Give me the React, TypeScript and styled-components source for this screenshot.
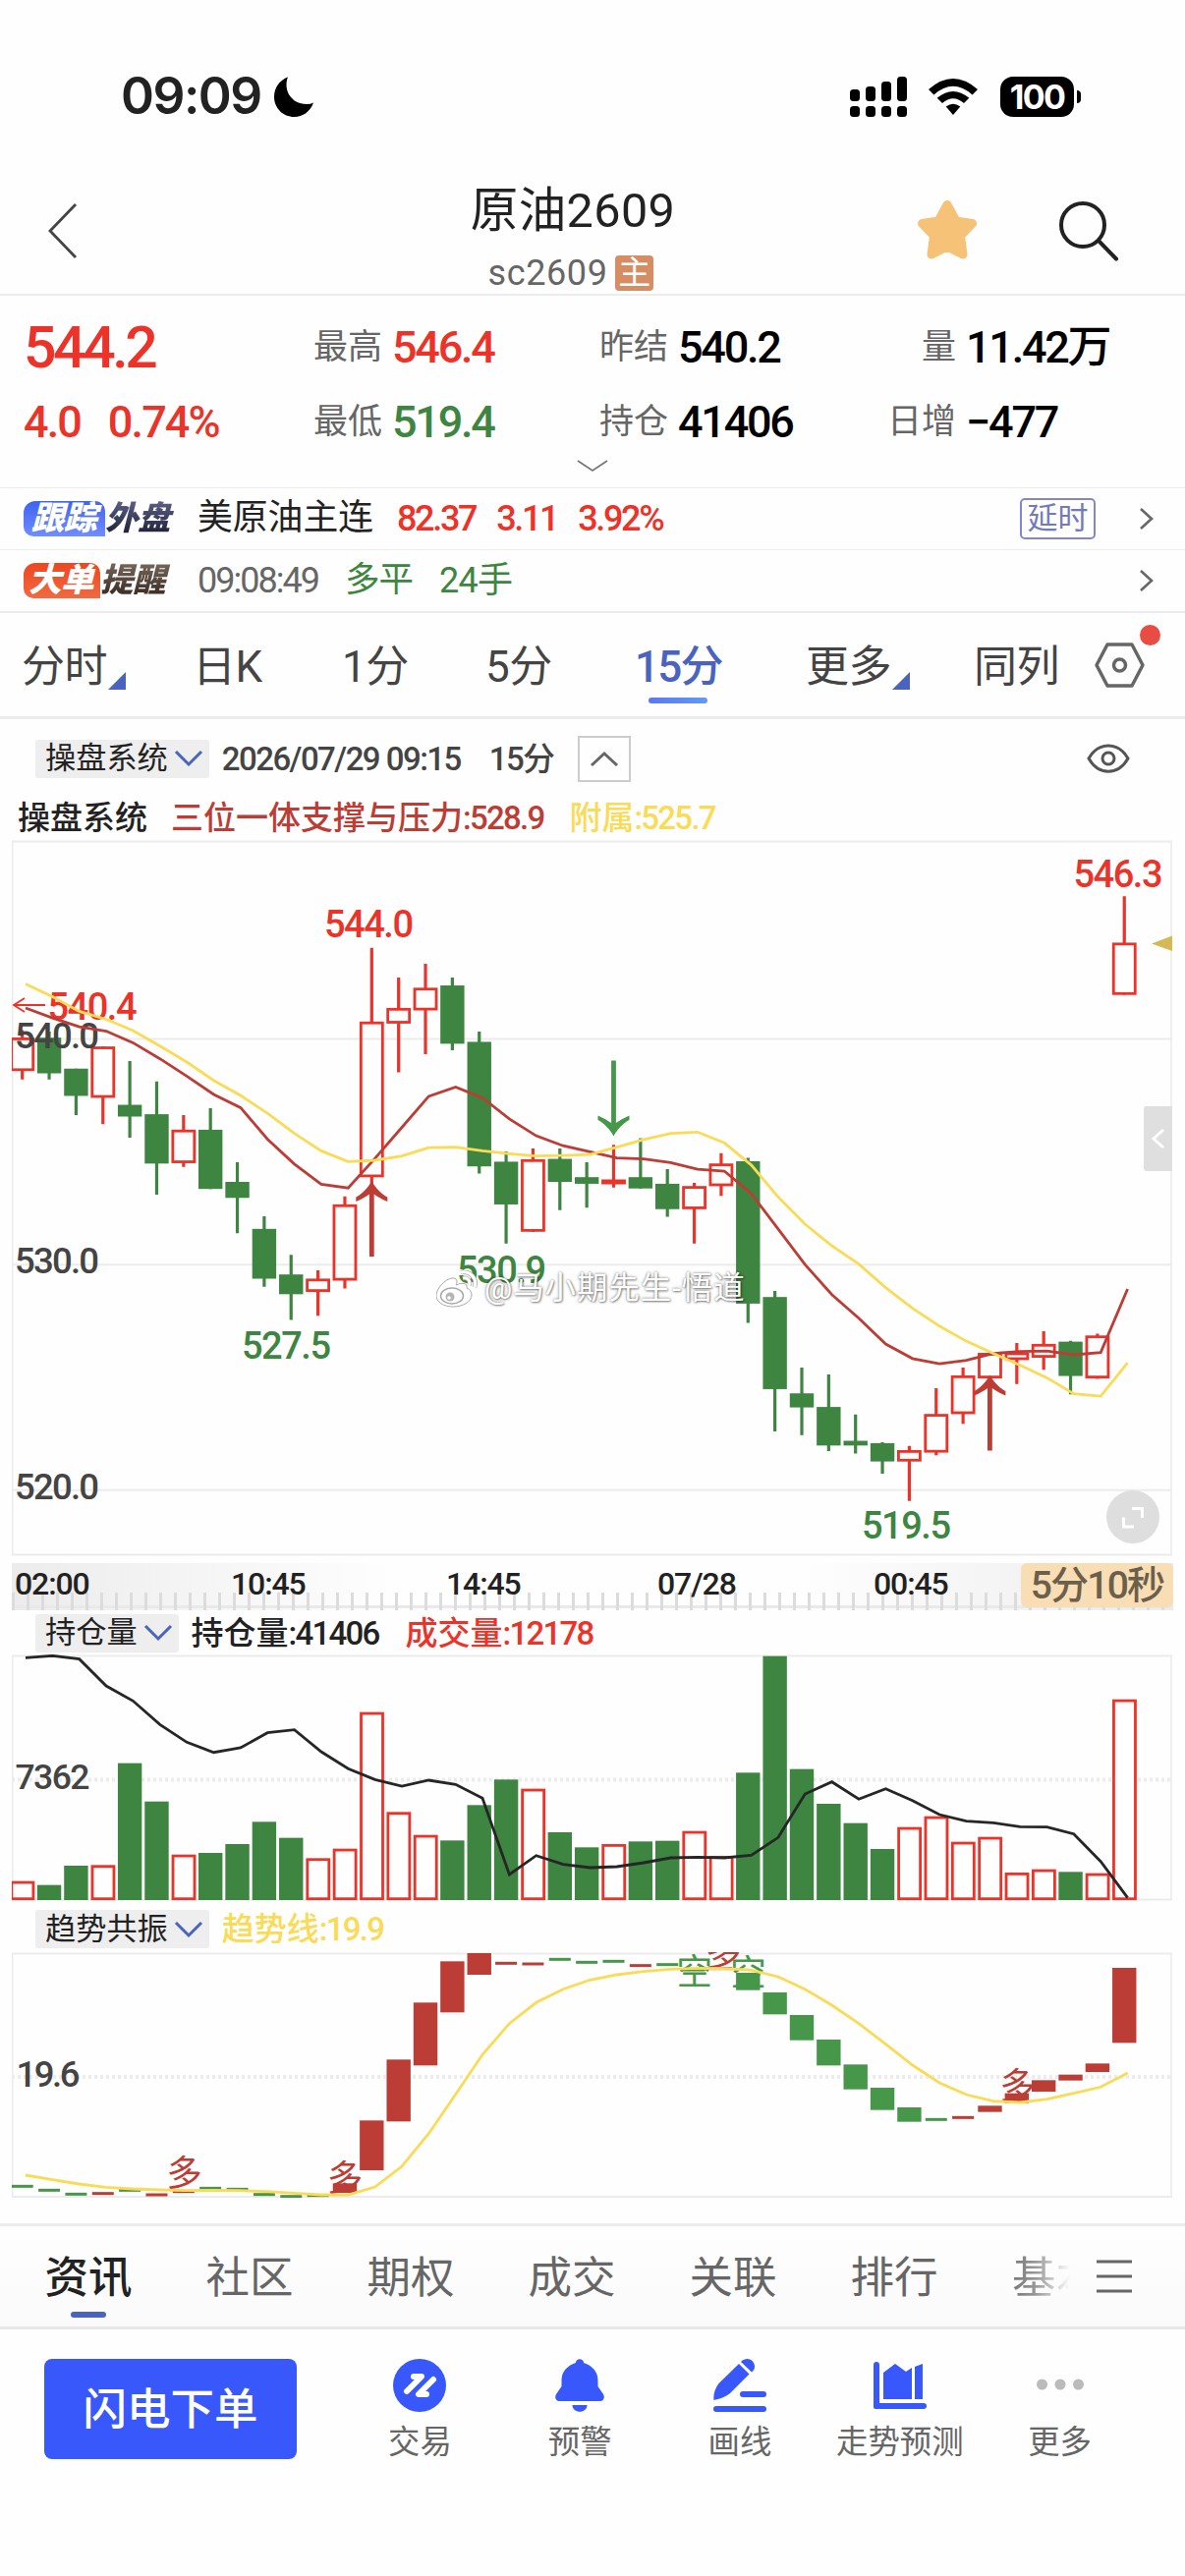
import React from 'react';
import styled, { createGlobalStyle, css } from 'styled-components';

const colors = {
  red: '#eb3329',
  green: '#3d8540',
  deepRed: '#bb3d35',
  trendGreen: '#469749',
  yellow: '#fadb58',
  blue: '#4a63be',
  action: '#3858fb',
  text: '#222222',
  axis: '#444444',
  muted: '#666666',
  line: '#ececec',
  badge: '#eeeeee',
};

const GlobalStyle = createGlobalStyle`
  * {
    box-sizing: border-box;
  }
  body {
    margin: 0;
    background: #fefefe;
    color: ${colors.text};
    font-family: Roboto, 'Noto Sans CJK SC', sans-serif;
    line-height: 1;
  }
  svg {
    display: block;
    flex-shrink: 0;
  }
`;

/***************************************************************
  Chart data. One entry per 15 minute bar.
  Candles: [direction, high, body top, body bottom, low]
***************************************************************/

type Candle = ['r' | 'g', number, number, number, number];

const candles: Candle[] = [
  ['r', 415, 431, 502, 520], ['g', 418, 431, 507, 520], ['g', 497, 497, 555, 596],
  ['r', 450, 450, 559, 615], ['g', 481, 574, 599, 644], ['g', 524, 594, 699, 765],
  ['r', 596, 627, 698, 706], ['g', 581, 627, 753, 753], ['g', 696, 738, 772, 847],
  ['g', 811, 838, 944, 961], ['g', 893, 935, 977, 1032], ['r', 926, 944, 972, 1023],
  ['r', 769, 786, 948, 965], ['r', 240, 397, 728, 745], ['r', 303, 368, 401, 505],
  ['r', 274, 325, 373, 466], ['g', 303, 320, 444, 458], ['g', 418, 440, 705, 720],
  ['g', 673, 695, 786, 869], ['r', 667, 690, 844, 844], ['g', 667, 689, 738, 798],
  ['g', 696, 728, 742, 793], ['r', 659, 733, 743, 750], ['g', 645, 728, 752, 752],
  ['g', 711, 742, 796, 812], ['r', 740, 747, 796, 869], ['r', 677, 699, 747, 768],
  ['g', 687, 694, 997, 1038], ['g', 970, 983, 1179, 1269], ['g', 1133, 1188, 1218, 1277],
  ['g', 1148, 1217, 1299, 1311], ['g', 1233, 1289, 1299, 1316], ['g', 1292, 1294, 1333, 1359],
  ['r', 1300, 1309, 1333, 1417], ['r', 1177, 1232, 1314, 1320], ['r', 1133, 1150, 1232, 1253],
  ['r', 1101, 1102, 1156, 1156], ['r', 1081, 1101, 1117, 1168], ['r', 1056, 1083, 1112, 1138],
  ['g', 1076, 1078, 1151, 1190], ['r', 1061, 1065, 1156, 1157], ['r', 130, 229, 340, 340],
];

const supportLine = [
  368, 389, 408, 417, 442, 476, 513, 552, 580, 647, 700, 743, 751, 688, 622, 556, 536, 559,
  604, 640, 661, 674, 687, 689, 697, 711, 715, 763, 838, 914, 978, 1028, 1083, 1114, 1125,
  1118, 1103, 1099, 1098, 1106, 1101, 966,
];

const auxLine = [
  317, 344, 375, 392, 416, 449, 483, 522, 554, 592, 635, 672, 695, 692, 683, 665, 664, 672,
  678, 683, 682, 680, 664, 648, 635, 632, 655, 702, 770, 828, 874, 913, 963, 1007, 1045,
  1077, 1103, 1128, 1155, 1189, 1194, 1123,
];

const volumes = [
  1034, 1046, 987, 985, 674, 791, 953, 948, 921, 853, 902, 964, 935, 518, 823, 893, 910, 802,
  724, 752, 885, 931, 921, 913, 911, 881, 957, 703, 347, 692, 798, 857, 936, 869, 836, 914,
  899, 1008, 998, 1006, 1010, 479,
];

const openInterest = [
  352, 346, 356, 438, 484, 556, 610, 641, 627, 581, 572, 639, 691, 724, 744, 726, 739, 781,
  1014, 956, 983, 993, 990, 978, 963, 961, 963, 955, 901, 768, 731, 784, 752, 788, 831, 851,
  856, 868, 869, 890, 974, 1085,
];

// A bar with one value is drawn as a dash.
const trendBars: [('r' | 'g'), number, number?][] = [
  ['g', 886], ['g', 898], ['g', 910], ['r', 908], ['g', 898], ['r', 912], ['r', 902],
  ['g', 892], ['g', 895], ['g', 911], ['g', 917], ['g', 914], ['r', 877, 906],
  ['r', 685, 837], ['r', 499, 688], ['r', 325, 517], ['r', 199, 355], ['r', 174, 240],
  ['r', 205], ['r', 207], ['g', 193], ['g', 202], ['g', 199], ['r', 212], ['g', 209],
  ['g', 225], ['r', 221], ['g', 234, 287], ['g', 294, 361], ['g', 363, 440],
  ['g', 438, 517], ['g', 514, 590], ['g', 585, 653], ['g', 645, 689], ['g', 682],
  ['r', 676], ['r', 640, 659], ['r', 602, 632], ['r', 562, 597], ['r', 545, 563],
  ['r', 511, 537], ['r', 219, 448],
];

const trendLine = [
  852, 866, 879, 889, 894, 897, 899, 898, 899, 902, 907, 912, 912, 888, 825, 725, 605, 484,
  389, 325, 284, 256, 240, 230, 223, 220, 221, 226, 246, 284, 333, 389, 452, 516, 570, 606,
  626, 630, 620, 602, 583, 540,
];

const barX = (i: number) => 22.7 + i * 27.355;
const priceY = (v: number) => v / 2.0907 - 5;
const volumeY = (v: number) => v / 3 - 114;
const trendY = (v: number) => v / 3 - 57;

const toPoints = (values: number[], y: (v: number) => number) =>
  values.map((v, i) => `${(barX(i) + 3.3).toFixed(1)},${y(v).toFixed(1)}`).join(' ');

/***************************************************************
  Status bar and header
***************************************************************/

const Screen = styled.main`
  width: 1206px;
  height: 2622px;
  overflow: hidden;
  background: #fefefe;
`;

const StatusBar = styled.div`
  display: flex;
  align-items: center;
  height: 176px;
  padding: 20px 106px 0 123px;
`;

const Clock = styled.span`
  width: 156px;
  font: 600 51.5px/1 Inter, sans-serif;
  letter-spacing: -1.5px;
  white-space: nowrap;
`;

const StatusIcons = styled.div`
  display: flex;
  align-items: center;
  margin-left: auto;
`;

const Battery = styled.div`
  position: relative;
  width: 75px;
  height: 41px;
  margin: 0 7px 0 23px;
  border-radius: 13px;
  background: #000;
  color: #fff;
  font: 700 34px/41px Inter, sans-serif;
  letter-spacing: -1.6px;
  text-align: center;

  &::after {
    content: '';
    position: absolute;
    left: 78px;
    top: 14px;
    width: 4px;
    height: 13px;
    border-radius: 0 4px 4px 0;
    background: #000;
  }
`;

const Header = styled.header`
  display: grid;
  grid-template-columns: 430px 306px 1fr;
  height: 125px;
  border-bottom: 2px solid ${colors.line};
`;

const HeaderLeft = styled.div`
  padding: 30px 0 0 48px;
`;

const HeaderTitle = styled.div`
  display: flex;
  flex-direction: column;
  align-items: center;
  font-size: 48px;
`;

const Title = styled.h1`
  margin: 12px 0 0;
  font-size: 48.5px;
  line-height: 54px;
  font-weight: 400;
  letter-spacing: 0.4px;
`;

const Subtitle = styled.div`
  display: flex;
  align-items: center;
  gap: 8px;
  margin: 18px 0 0 -4px;
  color: ${colors.muted};
  font-size: 36px;
  letter-spacing: 0.6px;
`;

const MainTag = styled.span`
  width: 39px;
  height: 36px;
  border-radius: 4px;
  background: #d68d63;
  color: #fff;
  font-size: 33px;
  line-height: 35px;
  text-align: center;
`;

const HeaderRight = styled.div`
  display: flex;
  gap: 82px;
  padding: 27px 0 0 197px;
`;

/***************************************************************
  Quote summary
***************************************************************/

const Quotes = styled.section`
  display: flex;
  flex-direction: column;
  height: 196px;
  border-bottom: 1px solid ${colors.line};
`;

const QuoteRow = styled.div`
  display: grid;
  grid-template-columns: 295px 291px 290px 1fr;
  align-items: center;
  height: 76px;
  padding-left: 24px;

  &:first-child {
    margin-top: 14px;
  }
`;

const Quote = styled.div`
  display: flex;
  align-items: center;
  gap: 10px;
`;

const QuoteLabel = styled.span<{ $end?: boolean }>`
  color: ${colors.muted};
  font-size: 35px;
  ${({ $end }) =>
    $end &&
    css`
      width: 73px;
      text-align: right;
    `}
`;

const Num = styled.span<{ $size: number; $color?: string; $weight?: number; $track?: number }>`
  color: ${({ $color }) => $color ?? '#000'};
  font-size: ${({ $size }) => $size}px;
  font-weight: ${({ $weight }) => $weight ?? 500};
  letter-spacing: ${({ $track }) => $track ?? -0.05}em;
  white-space: pre;
`;

const ExpandQuotes = styled.div`
  display: flex;
  justify-content: center;
  margin-top: 1px;
`;

/***************************************************************
  Notices
***************************************************************/

const Notice = styled.div<{ $last?: boolean }>`
  display: flex;
  align-items: center;
  height: ${({ $last }) => ($last ? 64 : 63)}px;
  padding: 0 32px 0 24px;
  border-bottom: ${({ $last }) => ($last ? 2 : 1)}px solid ${colors.line};
  font-size: 36px;
`;

const Brand = styled.div`
  display: flex;
  width: 177px;
  font-size: 33.5px;
  font-weight: 800;
  font-style: italic;
  line-height: 36px;
  letter-spacing: -0.6px;
`;

const BrandTag = styled.span<{ $warm?: boolean }>`
  width: ${({ $warm }) => ($warm ? 78 : 83)}px;
  height: 36px;
  padding-left: ${({ $warm }) => ($warm ? 5 : 8)}px;
  border-radius: 12px 10px 0 10px;
  background: ${({ $warm }) =>
    $warm
      ? 'linear-gradient(#ee4620, #f06a41)'
      : 'linear-gradient(#3f63f2, #6f8dff)'};
  color: #fff;
`;

const BrandName = styled.span<{ $warm?: boolean }>`
  padding-right: 6px;
  background: ${({ $warm }) =>
    $warm ? 'linear-gradient(#77675a, #35271f)' : 'linear-gradient(#5c6088, #1a1c30)'};
  background-clip: text;
  color: transparent;
`;

const NoticeName = styled.span`
  width: 203px;
  font-size: 35.8px;
`;

const NoticeValues = styled.div<{ $gap: number }>`
  display: flex;
  align-items: center;
  gap: ${({ $gap }) => $gap}px;
`;

const NoticeEnd = styled.div`
  display: flex;
  align-items: center;
  gap: 45px;
  margin-left: auto;
`;

const DelayTag = styled.span`
  width: 77px;
  height: 42px;
  border: 2px solid #8086cf;
  border-radius: 5px;
  color: #7379bd;
  font-size: 31px;
  line-height: 38px;
  text-align: center;
`;

/***************************************************************
  Period tabs
***************************************************************/

const Periods = styled.nav`
  display: flex;
  align-items: center;
  height: 108px;
  padding-left: 22px;
  border-bottom: 3px solid ${colors.line};
`;

const Period = styled.div<{ $width: number; $active?: boolean }>`
  position: relative;
  top: 2px;
  width: ${({ $width }) => $width}px;
  color: ${({ $active }) => ($active ? colors.blue : '#444')};
  font-size: 44px;
  font-weight: ${({ $active }) => ($active ? 500 : 400)};
  letter-spacing: ${({ $active }) => ($active ? -1.8 : -0.6)}px;
  line-height: 60px;
  white-space: nowrap;
`;

const ActiveLine = styled.i`
  position: absolute;
  left: 14px;
  top: 61px;
  width: 60px;
  height: 6px;
  border-radius: 3px;
  background: linear-gradient(90deg, #5a78ee, #629af8);
`;

const Corner = styled.i`
  position: absolute;
  left: 88px;
  top: 35px;
  border-left: 18px solid transparent;
  border-bottom: 18px solid ${colors.blue};
`;

const Settings = styled.div`
  position: relative;
`;

const RedDot = styled.i`
  position: absolute;
  left: 46px;
  top: -18px;
  width: 21px;
  height: 21px;
  border-radius: 50%;
  background: #e74c45;
`;

/***************************************************************
  Chart panels
***************************************************************/

const Toolbar = styled.div`
  display: flex;
  align-items: center;
  height: 78px;
  padding: 2px 56px 0 36px;
`;

const Picker = styled.div`
  display: flex;
  align-items: center;
  gap: 8px;
  height: 39px;
  padding: 0 8px 0 10px;
  border-radius: 3px;
  background: ${colors.badge};
  font-size: 31.2px;
`;

const CollapseButton = styled.div`
  display: flex;
  align-items: center;
  justify-content: center;
  width: 54px;
  height: 47px;
  margin-left: 24px;
  border: 2px solid #ccc;
`;

const EyeSlot = styled.div`
  margin-left: auto;
`;

const Legend = styled.div<{ $height: number; $left: number; $top?: number }>`
  display: flex;
  align-items: center;
  height: ${({ $height }) => $height}px;
  padding: ${({ $top }) => $top ?? 0}px 0 0 ${({ $left }) => $left}px;
`;

const LegendItem = styled.span<{ $color: string; $gap: number }>`
  margin-left: ${({ $gap }) => $gap}px;
  color: ${({ $color }) => $color};
  font-size: 33px;
  font-weight: 500;
  white-space: nowrap;

  b {
    font-weight: 500;
    letter-spacing: -1.75px;
  }
`;

const DateItem = styled(LegendItem)`
  color: ${colors.axis};
  letter-spacing: -1.55px;
`;

const PricePanel = styled.div`
  position: relative;
  height: 729px;
`;

const SideTab = styled.div`
  position: absolute;
  left: 1164px;
  top: 271px;
  display: flex;
  align-items: center;
  justify-content: center;
  width: 29px;
  height: 66px;
  border-radius: 3px 0 0 3px;
  background: #dfdfdf;
`;

const FullScreen = styled.div`
  position: absolute;
  left: 1126px;
  top: 662px;
  width: 54px;
  height: 54px;
  border-radius: 50%;
  background: rgba(218, 218, 218, 0.88);
`;

const Watermark = styled.div`
  position: absolute;
  left: 444px;
  top: 436px;
  display: flex;
  align-items: center;
  gap: 7px;
  color: #fff;
  font-size: 31.5px;
  line-height: 42px;
  letter-spacing: 0.9px;
  white-space: nowrap;
  text-shadow: 0 0 3px rgba(0, 0, 0, 0.55), 1px 1px 2px rgba(0, 0, 0, 0.35);
`;

const TimeAxis = styled.div`
  display: grid;
  grid-template-columns: 220px 219px 215px 220px 1fr auto;
  width: 1182px;
  height: 48px;
  margin: 7px 0 0 12px;
  padding-left: 3px;
  background:
    repeating-linear-gradient(90deg, #dcdcdc 0 3px, transparent 3px 15px) 0 30px / 100% 18px
      no-repeat,
    linear-gradient(#e9e9e9, #e9e9e9) 0 43px / 100% 3px no-repeat,
    linear-gradient(90deg, #ececec, #fefefe 33%, #fefefe 68%, #ececec);
`;

const TimeLabel = styled.span`
  padding-top: 5px;
  font-size: 32px;
  font-weight: 500;
  letter-spacing: -1.1px;
`;

const Countdown = styled.span`
  width: 155px;
  height: 45px;
  border-radius: 6px;
  background: #f9deb5;
  color: #6b604c;
  font-size: 39px;
  font-weight: 500;
  letter-spacing: -1.8px;
  line-height: 46px;
  text-align: center;
  white-space: nowrap;
`;

const ChartText = styled.text`
  font-family: Roboto, 'Noto Sans CJK SC', sans-serif;
  font-weight: 500;
`;

const MarkText = styled(ChartText)`
  font-size: 36.5px;
  font-weight: 400;
  text-anchor: middle;
`;

/***************************************************************
  Bottom navigation
***************************************************************/

const InfoTabs = styled.nav`
  display: flex;
  align-items: center;
  height: 108px;
  margin-top: 26px;
  padding-left: 8px;
  border-top: 3px solid ${colors.line};
  border-bottom: 3px solid #e7e7e7;
  background: linear-gradient(#fefefe, #fafafa);
`;

const InfoTab = styled.div<{ $active?: boolean }>`
  position: relative;
  width: 164px;
  color: ${({ $active }) => ($active ? '#222' : colors.muted)};
  font-size: 44.5px;
  font-weight: ${({ $active }) => ($active ? 500 : 400)};
  line-height: 60px;
  padding-top: 4px;
  text-align: center;

  &::after {
    content: '';
    display: ${({ $active }) => ($active ? 'block' : 'none')};
    position: absolute;
    left: 64px;
    top: 68px;
    width: 36px;
    height: 6px;
    border-radius: 3px;
    background: ${colors.blue};
  }
`;

const FadedTab = styled.div`
  width: 62px;
  margin: 0 24px 0 38px;
  padding-top: 4px;
  overflow: hidden;
  background: linear-gradient(90deg, #777 0, #999 40%, transparent 95%);
  background-clip: text;
  color: transparent;
  font-size: 44.5px;
  line-height: 60px;
  white-space: nowrap;
`;

const BottomBar = styled.footer`
  display: flex;
  padding: 30px 0 0 45px;
`;

const OrderButton = styled.button`
  width: 257px;
  height: 102px;
  margin-right: 44px;
  padding: 2px 0 0;
  border: 0;
  border-radius: 8px;
  background: ${colors.action};
  color: #fff;
  font: 500 44.5px/100px Roboto, 'Noto Sans CJK SC', sans-serif;
`;

const Action = styled.div`
  display: flex;
  flex-direction: column;
  align-items: center;
  gap: 15px;
  width: 162.8px;
  color: ${colors.muted};
  font-size: 32.4px;
  white-space: nowrap;
`;

/***************************************************************
  Small drawings
***************************************************************/

const Chevron: React.FC<{
  width: number;
  height: number;
  points: string;
  color: string;
  stroke?: number;
}> = ({ width, height, points, color, stroke = 3 }) => (
  <svg width={width} height={height} overflow="visible">
    <polyline points={points} fill="none" stroke={color} strokeWidth={stroke} />
  </svg>
);

const PickerArrow = () => (
  <Chevron width={26} height={14} points="0,0 13,13 26,0" color={colors.blue} />
);

const NextArrow = () => (
  <Chevron width={14} height={20} points="1,0 12,10 1,20" color="#666" stroke={2.6} />
);

const SignalIcon = () => (
  <svg width="58" height="41">
    {[13, 10, 5, 0].map((top, i) => (
      <g key={top}>
        <rect x={i * 16} y={top} width="10" height={25 - top} rx="3.5" />
        <rect x={i * 16} y="30" width="10" height="11" rx="3.5" />
      </g>
    ))}
  </svg>
);

const WifiIcon = () => (
  <svg width="50" height="37" viewBox="0 0 50 37">
    <path d="M0 11Q25-11 50 11L44.6 16.6Q25-1 5.4 16.6Z" />
    <path d="M8.7 19.8Q25 6 41.3 19.8L36 25Q25 15.5 14 25Z" />
    <path d="M17.7 28.5Q25 23 32.3 28.5L25 37Z" />
  </svg>
);

const SignalArrow: React.FC<{ x: number; y: number; color: string; down?: boolean }> = ({
  x,
  y,
  color,
  down,
}) => (
  <path
    transform={`translate(${x} ${y}) scale(1 ${down ? -1 : 1})`}
    d="M0 0C4 8 11 14 16 16.5V21C10 18.5 6 16 2.4 13.5V77H-2.4V13.5C-6 16-10 18.5-16 21V16.5C-11 14-4 8 0 0Z"
    fill={color}
  />
);

const WeiboIcon = () => (
  <svg width="42" height="38" viewBox="0 0 42 38" fill="none">
    <path
      d="M36 25C36 32 27 37 17 37S0 32 0 26C0 18 9 9 16 8C21 7.5 22 11 20 15C27 12 32 13 31 18C34 19 36 22 36 25Z"
      fill="#fff"
      stroke="#aaa"
    />
    <ellipse cx="16" cy="26" rx="11.5" ry="8" stroke="#aaa" strokeWidth="1.5" />
    <circle cx="14" cy="27" r="4.5" fill="#b5b5b5" />
    <circle cx="13" cy="28" r="1.8" fill="#fff" />
    <path d="M25 2C34 0 42 8 39 17M27 8C32 7 35 11 33.5 15" stroke="#aaa" strokeWidth="4.5" />
    <path d="M25 2C34 0 42 8 39 17M27 8C32 7 35 11 33.5 15" stroke="#fff" strokeWidth="3" />
  </svg>
);

const Frame: React.FC<{ bottom: number }> = ({ bottom }) => (
  <>
    <path d={`M12 1.5H1193M12 ${bottom}H1193`} stroke={colors.line} strokeWidth="2" />
    <path d={`M12.7 1V${bottom}M1192 1V${bottom}`} stroke={colors.line} strokeWidth="1.5" />
  </>
);

/***************************************************************
  Charts
***************************************************************/

const priceTags = [
  { text: '544.0', x: 330, y: 99, color: colors.red },
  { text: '540.4', x: 48.5, y: 183, color: colors.red },
  { text: '546.3', x: 1092.5, y: 48, color: colors.red },
  { text: '527.5', x: 246, y: 528, color: colors.green },
  { text: '530.9', x: 465, y: 450.5, color: colors.green },
  { text: '519.5', x: 877, y: 711, color: colors.green },
];

const axisTags = [
  { text: '540.0', y: 211.5 },
  { text: '530.0', y: 440.8 },
  { text: '520.0', y: 670.5 },
];

const PriceChart = () => (
  <svg width="1206" height="729">
    <defs>
      <clipPath id="plot">
        <rect x="12" y="0" width="1182" height="729" />
      </clipPath>
    </defs>
    <Frame bottom={727.5} />
    {[434, 914, 1394].map((v) => (
      <path key={v} d={`M12 ${priceY(v)}H1193`} stroke={colors.line} strokeWidth="2" />
    ))}
    <g clipPath="url(#plot)">
      {candles.map(([side, high, top, bottom, low], i) => {
        const x = barX(i);
        const color = side === 'r' ? colors.red : colors.green;
        return (
          <g key={i}>
            <path
              d={`M${x} ${priceY(high)}V${priceY(top) + 1}M${x} ${priceY(bottom) - 1}V${priceY(low)}`}
              stroke={color}
              strokeWidth="3.2"
            />
            {side === 'g' ? (
              <rect
                x={x - 12.2}
                y={priceY(top)}
                width="24.4"
                height={priceY(bottom) - priceY(top)}
                fill={color}
              />
            ) : (
              <rect
                x={x - 11}
                y={priceY(top) + 1.3}
                width="22"
                height={Math.max(priceY(bottom) - priceY(top) - 2.6, 1.5)}
                fill="none"
                stroke={color}
                strokeWidth="2.8"
              />
            )}
          </g>
        );
      })}
    </g>
    {axisTags.map(({ text, y }) => (
      <ChartText key={text} x="15" y={y} fontSize="36.5" fill={colors.axis} textLength="86">
        {text}
      </ChartText>
    ))}
    {priceTags.map(({ text, x, y, color }) => (
      <ChartText key={text} x={x} y={y} fontSize="38" fill={color} textLength="91">
        {text}
      </ChartText>
    ))}
    <path d="M46 168H14M25 161L14 168L25 175" fill="none" stroke={colors.red} strokeWidth="1.8" />
    <polyline
      points={toPoints(supportLine, priceY)}
      fill="none"
      stroke={colors.deepRed}
      strokeWidth="2.8"
    />
    <polyline
      points={toPoints(auxLine, priceY)}
      fill="none"
      stroke={colors.yellow}
      strokeWidth="2.8"
    />
    <SignalArrow x={378.3} y={347} color={colors.deepRed} />
    <SignalArrow x={1007.4} y={544.5} color={colors.deepRed} />
    <SignalArrow x={624.5} y={301.5} color={colors.trendGreen} down />
    <path d="M1172 105.5L1193 97.5V113Z" fill="#d4b955" />
  </svg>
);

const VolumeChart = () => (
  <svg width="1206" height="251">
    <Frame bottom={249.5} />
    <path d="M12 127.5H1193" stroke={colors.line} strokeWidth="4" strokeDasharray="3 3" />
    <g clipPath="url(#plot)">
      {volumes.map((v, i) => {
        const x = barX(i);
        const y = volumeY(v);
        return candles[i][0] === 'g' ? (
          <rect key={i} x={x - 12.2} y={y} width="24.4" height={250 - y} fill={colors.green} />
        ) : (
          <rect
            key={i}
            x={x - 10.8}
            y={y + 1.4}
            width="22"
            height={247.3 - y}
            fill="#fefefe"
            stroke={colors.red}
            strokeWidth="2.8"
          />
        );
      })}
    </g>
    <polyline
      points={toPoints(openInterest, volumeY)}
      fill="none"
      stroke="#262626"
      strokeWidth="2.8"
    />
    <ChartText x="15.5" y="136.7" fontSize="35.5" fill={colors.axis} textLength="76">
      7362
    </ChartText>
  </svg>
);

const trendMarks = [
  { text: '多', x: 187.5, y: 238, short: false },
  { text: '多', x: 351, y: 242.5, short: false },
  { text: '空', x: 706.7, y: 32.5, short: true },
  { text: '多', x: 736, y: 14, short: false },
  { text: '空', x: 761.5, y: 34, short: true },
  { text: '多', x: 1035.5, y: 148.5, short: false },
];

const TrendChart = () => (
  <svg width="1206" height="250">
    <Frame bottom={249} />
    <path d="M12 127H1193" stroke={colors.line} strokeWidth="4" strokeDasharray="3 3" />
    {trendMarks.map(({ text, x, y, short }) => (
      <MarkText key={x} x={x} y={y} fill={short ? colors.trendGreen : colors.deepRed}>
        {text}
      </MarkText>
    ))}
    <g clipPath="url(#plot)">
      {trendBars.map(([side, top, bottom], i) => {
        const fill = side === 'r' ? colors.deepRed : colors.trendGreen;
        return bottom ? (
          <rect
            key={i}
            x={barX(i) - 12.2}
            y={trendY(top)}
            width="24.4"
            height={(bottom - top) / 3}
            fill={fill}
          />
        ) : (
          <rect key={i} x={barX(i) - 11} y={trendY(top) - 1.5} width="22" height="3" fill={fill} />
        );
      })}
    </g>
    <polyline
      points={toPoints(trendLine, trendY)}
      fill="none"
      stroke={colors.yellow}
      strokeWidth="2.8"
    />
    <ChartText x="16.5" y="137" fontSize="36.5" fill={colors.axis} textLength="65">
      19.6
    </ChartText>
  </svg>
);

/***************************************************************
  Page
***************************************************************/

const App: React.FC = () => {
  return (
    <Screen>
      <GlobalStyle />
      <StatusBar>
        <Clock>09:09</Clock>
        <svg width="41" height="41" viewBox="0 0 41 41">
          <path d="M14 .5C9 13 17 28 33 28Q37.5 28 40 26.5C37 35.5 29 41 20.5 41C9 41 0 32 0 20.5C0 11.5 5.5 3.5 14 .5Z" />
        </svg>
        <StatusIcons>
          <SignalIcon />
          <svg width="22" height="1" />
          <WifiIcon />
          <Battery>100</Battery>
        </StatusIcons>
      </StatusBar>

      <Header>
        <HeaderLeft>
          <Chevron width={32} height={56} points="29,2 3,29 29,56" color="#444" stroke={2.8} />
        </HeaderLeft>
        <HeaderTitle>
          <Title>原油2609</Title>
          <Subtitle>
            sc2609<MainTag>主</MainTag>
          </Subtitle>
        </HeaderTitle>
        <HeaderRight>
          <svg width="62" height="62" viewBox="0 0 62 62">
            <path
              d="M31 5.500L40 22L56.500 24.500L44.500 37L47 56L31 48L15 56L17.500 37L5.500 24.500L22 22Z"
              fill="#f6c277"
              stroke="#f6c277"
              strokeWidth="9"
              strokeLinejoin="round"
            />
          </svg>
          <svg width="64" height="64" fill="none" stroke="#222" strokeWidth="4">
            <circle cx="25" cy="26" r="22" />
            <path d="M41 42L59 60.5" strokeLinecap="round" />
          </svg>
        </HeaderRight>
      </Header>

      <Quotes>
        <QuoteRow>
          <Num $size={59} $color={colors.red} $track={-0.058}>544.2</Num>
          <Quote>
            <QuoteLabel>最高</QuoteLabel>
            <Num $size={45} $color={colors.red}>546.4</Num>
          </Quote>
          <Quote>
            <QuoteLabel>昨结</QuoteLabel>
            <Num $size={45}>540.2</Num>
          </Quote>
          <Quote>
            <QuoteLabel $end>量</QuoteLabel>
            <Num $size={45}>11.42万</Num>
          </Quote>
        </QuoteRow>
        <QuoteRow>
          <Num $size={45} $color={colors.red} $track={-0.042}>4.0   0.74%</Num>
          <Quote>
            <QuoteLabel>最低</QuoteLabel>
            <Num $size={45} $color={colors.green}>519.4</Num>
          </Quote>
          <Quote>
            <QuoteLabel>持仓</QuoteLabel>
            <Num $size={45}>41406</Num>
          </Quote>
          <Quote>
            <QuoteLabel $end>日增</QuoteLabel>
            <Num $size={45}>−477</Num>
          </Quote>
        </QuoteRow>
        <ExpandQuotes>
          <Chevron width={30} height={12} points="0,1 15,11 30,1" color="#777" stroke={1.8} />
        </ExpandQuotes>
      </Quotes>

      <Notice>
        <Brand>
          <BrandTag>跟踪</BrandTag>
          <BrandName>外盘</BrandName>
        </Brand>
        <NoticeName>美原油主连</NoticeName>
        <NoticeValues $gap={21}>
          <Num $size={36} $color={colors.red} $track={-0.065}>82.37</Num>
          <Num $size={36} $color={colors.red} $track={-0.065}>3.11</Num>
          <Num $size={36} $color={colors.red} $track={-0.065}>3.92%</Num>
        </NoticeValues>
        <NoticeEnd>
          <DelayTag>延时</DelayTag>
          <NextArrow />
        </NoticeEnd>
      </Notice>
      <Notice $last>
        <Brand>
          <BrandTag $warm>大单</BrandTag>
          <BrandName $warm>提醒</BrandName>
        </Brand>
        <NoticeValues $gap={27}>
          <Num $size={36} $color={colors.muted} $weight={450} $track={-0.055}>09:08:49</Num>
          <Num $size={35.5} $color={colors.green} $weight={400} $track={-0.03}>多平</Num>
          <Num $size={36} $color={colors.green} $weight={400} $track={-0.02}>24手</Num>
        </NoticeValues>
        <NoticeEnd>
          <NextArrow />
        </NoticeEnd>
      </Notice>

      <Periods>
        <Period $width={174}>分时<Corner /></Period>
        <Period $width={152}>日K</Period>
        <Period $width={146}>1分</Period>
        <Period $width={152}>5分</Period>
        <Period $width={174} $active>15分<ActiveLine /></Period>
        <Period $width={171}>更多<Corner /></Period>
        <Period $width={123}>同列</Period>
        <Settings>
          <svg width="51" height="46" fill="none" stroke="#666" strokeWidth="3.5">
            <path d="M13 2H38L49 23L38 44H13L2 23Z" strokeLinejoin="round" />
            <circle cx="25.5" cy="23" r="6" />
          </svg>
          <RedDot />
        </Settings>
      </Periods>

      <Toolbar>
        <Picker>操盘系统<PickerArrow /></Picker>
        <DateItem $color={colors.axis} $gap={13}>2026/07/29 09:15</DateItem>
        <DateItem $color={colors.axis} $gap={29}>15分</DateItem>
        <CollapseButton>
          <Chevron width={26} height={13} points="0,13 13,1 26,13" color="#666" />
        </CollapseButton>
        <EyeSlot>
          <svg width="44" height="30" fill="none" stroke="#555" strokeWidth="3">
            <path d="M2 15C12-2.5 32-2.5 42 15C32 32.5 12 32.5 2 15Z" />
            <circle cx="22" cy="15" r="6" />
          </svg>
        </EyeSlot>
      </Toolbar>
      <Legend $height={45} $left={18}>
        <LegendItem $color="#222" $gap={0}>操盘系统</LegendItem>
        <LegendItem $color={colors.deepRed} $gap={24}>
          三位一体支撑与压力<b>:528.9</b>
        </LegendItem>
        <LegendItem $color={colors.yellow} $gap={26}>
          附属<b>:525.7</b>
        </LegendItem>
      </Legend>

      <PricePanel>
        <PriceChart />
        <Watermark>
          <WeiboIcon />
          @马小期先生-悟道
        </Watermark>
        <SideTab>
          <Chevron width={12} height={18} points="11,0 1,9 11,18" color="#fff" />
        </SideTab>
        <FullScreen>
          <svg width="54" height="54" fill="none" stroke="#fff" strokeWidth="3">
            <path d="M26 18.5H36.5V28M17.5 27.5V37H28" />
          </svg>
        </FullScreen>
      </PricePanel>

      <TimeAxis>
        <TimeLabel>02:00</TimeLabel>
        <TimeLabel>10:45</TimeLabel>
        <TimeLabel>14:45</TimeLabel>
        <TimeLabel>07/28</TimeLabel>
        <TimeLabel>00:45</TimeLabel>
        <Countdown>5分10秒</Countdown>
      </TimeAxis>

      <Legend $height={45} $left={36} $top={1}>
        <Picker>持仓量<PickerArrow /></Picker>
        <LegendItem $color="#222" $gap={13}>
          持仓量<b>:41406</b>
        </LegendItem>
        <LegendItem $color={colors.red} $gap={27}>
          成交量<b>:12178</b>
        </LegendItem>
      </Legend>
      <VolumeChart />

      <Legend $height={52} $left={36} $top={5}>
        <Picker>趋势共振<PickerArrow /></Picker>
        <LegendItem $color={colors.yellow} $gap={13}>
          趋势线<b>:19.9</b>
        </LegendItem>
      </Legend>
      <TrendChart />

      <InfoTabs>
        <InfoTab $active>资讯</InfoTab>
        <InfoTab>社区</InfoTab>
        <InfoTab>期权</InfoTab>
        <InfoTab>成交</InfoTab>
        <InfoTab>关联</InfoTab>
        <InfoTab>排行</InfoTab>
        <FadedTab>基本</FadedTab>
        <svg width="36" height="34" stroke="#666" strokeWidth="3">
          <path d="M0 2H36M0 17H36M0 32H36" />
        </svg>
      </InfoTabs>

      <BottomBar>
        <OrderButton>闪电下单</OrderButton>
        <Action>
          <svg width="54" height="54" fill="none" stroke="#fff" strokeLinecap="round" strokeLinejoin="round">
            <circle cx="27" cy="27" r="27" fill={colors.action} stroke="none" />
            <path d="M21 18H29L14 33M41 21L26 36H34" strokeWidth="6" />
          </svg>
          交易
        </Action>
        <Action>
          <svg width="54" height="54" fill={colors.action}>
            <path d="M23 4C23-1 31-1 31 4C40 7 45.5 13 45.5 22V28L51 36C53 40 51 43 48 43H6C3 43 1 40 3 36L8.5 28V22C8.5 13 14 7 23 4Z" />
            <path d="M19.5 47H34.5C34.5 56 19.5 56 19.5 47Z" />
          </svg>
          预警
        </Action>
        <Action>
          <svg width="54" height="54" fill={colors.action}>
            <path d="M26 5L36.5 15.5L17 35Q11 40 .5 42Q-.5 33 5.5 25Z" />
            <path d="M28 3C33-2 39 0 41 4C43 8 42 11 39 13.5Z" />
            <rect x="27" y="33" width="27" height="6" rx="3" />
            <rect x="0" y="48" width="54" height="6" rx="3" />
          </svg>
          画线
        </Action>
        <Action>
          <svg width="54" height="54" fill={colors.action}>
            <path d="M0 6Q0 3 3 3T6 6V45H51Q54 45 54 48T51 51H2Q0 51 0 49Z" />
            <path d="M10 14L22 5L33 13L39 9V41H10Z" />
            <path d="M42 8L50 5V41H42Z" />
          </svg>
          走势预测
        </Action>
        <Action>
          <svg width="54" height="54" fill="#bbb">
            <circle cx="8.5" cy="26" r="5.5" />
            <circle cx="27" cy="26" r="5.5" />
            <circle cx="45.5" cy="26" r="5.5" />
          </svg>
          更多
        </Action>
      </BottomBar>
    </Screen>
  );
};

export default App;
